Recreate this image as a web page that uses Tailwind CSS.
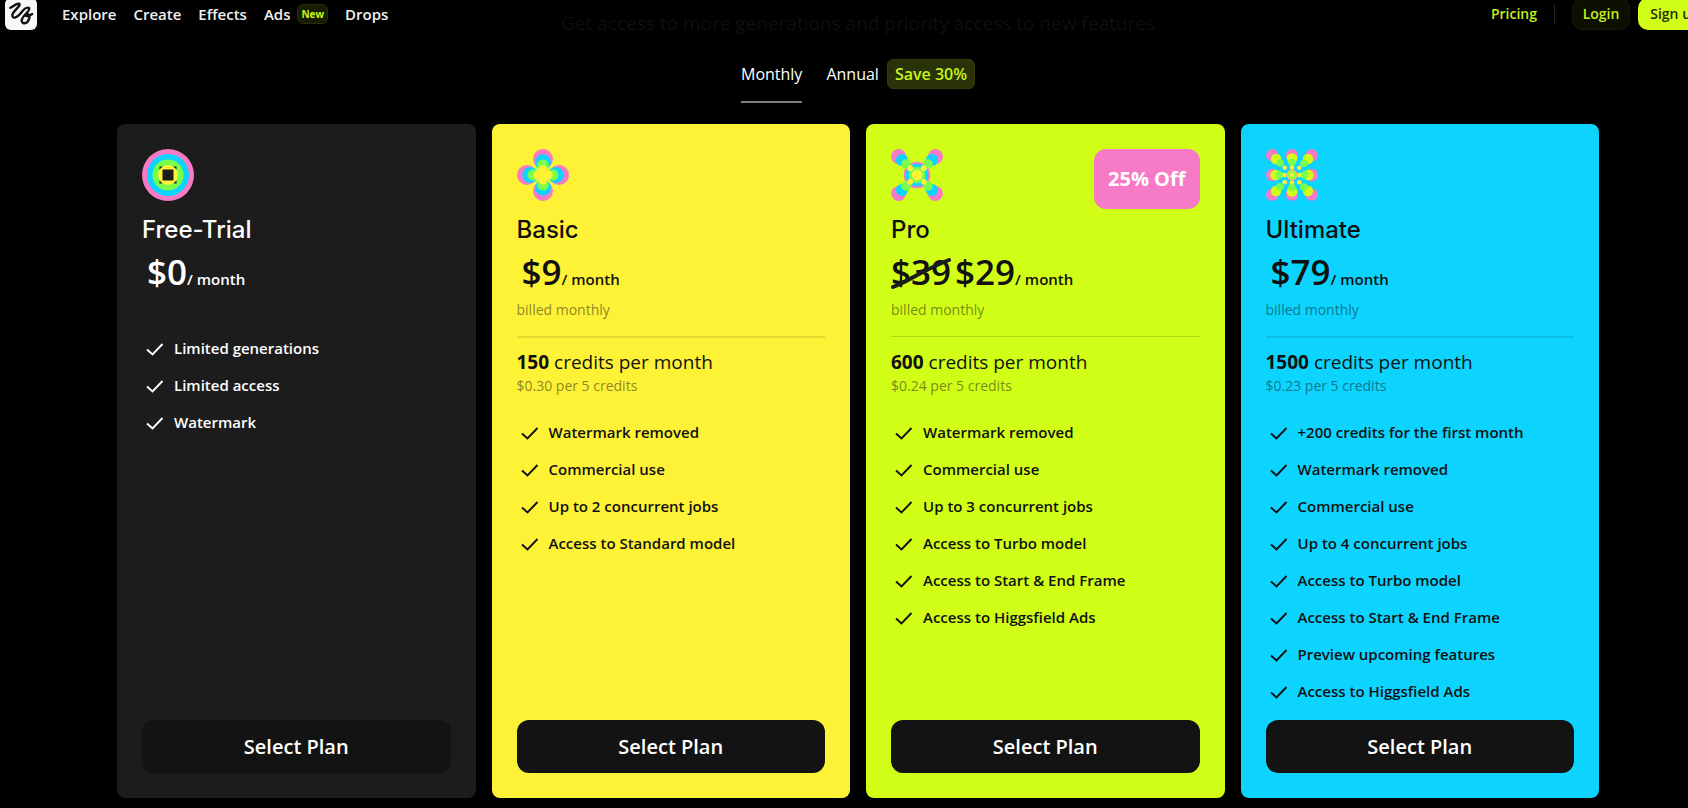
<!DOCTYPE html>
<html lang="en">

<head>
  <meta charset="UTF-8">
  <meta name="viewport" content="width=device-width, initial-scale=1.0">
  <script src="https://cdn.jsdelivr.net/npm/@tailwindcss/browser@4"></script>
  <title>Pricing</title>
</head>

<body class="bg-black text-white font-['Open_Sans',sans-serif] overflow-x-hidden">

  <!-- shared shapes -->
  <svg class="hidden">
    <symbol id="check" viewBox="0 0 18 14">
      <path d="M1 7.500 6.500 12.500 16.500 2" fill="none" stroke="currentColor" stroke-width="1.900" />
    </symbol>
    <g id="petal-basic">
      <circle cx="26" cy="10" r="10" fill="#f77ac6" />
      <circle cx="26" cy="13.300" r="8" fill="#0cd4ff" />
      <circle cx="26" cy="16.400" r="5.800" fill="#78ff4b" />
      <circle cx="26" cy="20.400" r="4.200" fill="#fef237" />
    </g>
    <g id="petal-pro">
      <circle cx="7.600" cy="7.600" r="7.500" fill="#f77ac6" />
      <circle cx="11" cy="11" r="6.100" fill="#0cd4ff" />
      <circle cx="15" cy="15" r="4.700" fill="#78ff4b" />
      <circle cx="19.200" cy="19.200" r="2.900" fill="#fef237" />
    </g>
    <g id="petal-ultimate">
      <circle cx="6.300" cy="6.300" r="6.200" fill="#f77ac6" />
      <circle cx="10" cy="10" r="5.200" fill="#d0fe17" />
      <circle cx="14.200" cy="14" r="3.700" fill="#78ff4b" />
      <circle cx="18.700" cy="18.700" r="2.300" fill="#fef237" />
      <circle cx="26" cy="6.300" r="6.200" fill="#f77ac6" />
      <circle cx="26" cy="9.500" r="5.200" fill="#d0fe17" />
      <circle cx="26" cy="13.500" r="3.700" fill="#78ff4b" />
      <circle cx="26" cy="18.700" r="2.300" fill="#fef237" />
    </g>
  </svg>

  <div class="-mr-7">
    <header class="absolute top-0 left-0 -right-7 h-7 pl-[5px] pr-1 flex items-center justify-between text-[15px] font-semibold">
      <div class="flex items-center">
        <a href="#" aria-label="Home" class="mr-[25px]">
          <svg class="w-8 h-8 rounded-md bg-[#f8f8f8]" viewBox="0 0 33 33" fill="none" stroke="#131313" stroke-width="2.500" stroke-linecap="round" stroke-linejoin="round">
            <path d="M5.500 10C8 9.500 11 5.500 14.500 6C17.500 8 7.500 13.500 7.500 18C8 22.500 13 19.500 16 16C19 12 22 8.500 24.800 10.300C27 13 17 18.500 17.200 23.500C18 27.800 23.500 26.500 25 21C26 16.500 21.500 14.500 21 17.500C21.500 19.500 25 18.500 28 16.500" />
          </svg>
        </a>
        <nav class="flex items-center gap-[17px] text-[#f0f0f0]">
          <a href="#">Explore</a>
          <a href="#">Create</a>
          <a href="#">Effects</a>
          <a href="#" class="flex items-center gap-[7px]">Ads
            <span class="h-5 px-[3px] rounded-md border border-[#272e08] bg-[#171c03] text-[#c8f51a] text-[10px] leading-[18px] font-bold">New</span>
          </a>
          <a href="#">Drops</a>
        </nav>
      </div>
      <div class="flex items-center text-sm text-[#c5f01c]">
        <a href="#">Pricing</a>
        <span class="w-px h-5 mx-[17px] bg-[#222]"></span>
        <button class="h-8 w-[58px] mr-2 rounded-[10px] border border-[#15190a] bg-[#0c0f02]">Login</button>
        <button class="h-8 w-[74px] rounded-[10px] bg-[#d0fe17] text-[#252d08]">Sign up</button>
      </div>
    </header>

    <main class="px-[117px] pt-[9px] pb-[10px]">
      <p class="text-center text-[19px] leading-7 text-[#0f0f0f]">Get access to more generations and priority access to new features</p>

      <div class="flex justify-center gap-6 mt-[21px] h-[45px]">
        <button class="pb-3 border-b-2 border-[#808080]">Monthly</button>
        <button class="flex items-center gap-2 h-[31px]">Annual
          <span class="px-[7px] h-[30px] leading-7 rounded-md border border-[#333b0a] bg-[#2a3208] text-[#c8f51a] font-semibold">Save 30%</span>
        </button>
      </div>

      <div class="grid grid-cols-4 gap-4 mt-[21px]">

        <section class="flex flex-col p-[25px] rounded-lg bg-[#1c1c1c]">
          <svg class="w-[52px] h-[52px]" viewBox="0 0 52 52">
            <circle cx="26" cy="26" r="26" fill="#f77ac6" />
            <circle cx="26" cy="26" r="21" fill="#0cd4ff" />
            <circle cx="26" cy="26" r="15.500" fill="#78ff4b" />
            <path d="M17.500 17.500h17v17h-17z" fill="#1c1c1c" />
            <path d="M26 16.500v19M16.500 26h19" stroke="#78ff4b" stroke-width="11" />
            <circle cx="26" cy="26" r="10" fill="#fef237" />
            <path d="M20.500 20.500h11v11h-11z" fill="#1c1c1c" />
          </svg>
          <h2 class="mt-[13px] font-['Inter',sans-serif] font-medium text-2xl leading-8">Free-Trial</h2>
          <p class="mt-[3px] pl-[5px] flex items-baseline"><span class="text-[35px] leading-[46px] font-semibold">$0</span><span class="font-semibold text-[15px] leading-5">/ month</span></p>
          <ul class="mt-[41px] flex flex-col gap-3 text-[15px] leading-[25px] font-semibold">
            <li class="flex items-center gap-[10px] pl-1"><svg class="w-[18px] h-[14px]"><use href="#check" /></svg>Limited generations</li>
            <li class="flex items-center gap-[10px] pl-1"><svg class="w-[18px] h-[14px]"><use href="#check" /></svg>Limited access</li>
            <li class="flex items-center gap-[10px] pl-1"><svg class="w-[18px] h-[14px]"><use href="#check" /></svg>Watermark</li>
          </ul>
          <button class="mt-auto h-[53px] rounded-xl bg-[#131313] text-white text-xl font-semibold">Select Plan</button>
        </section>

        <section class="flex flex-col p-[25px] rounded-lg bg-[#fef237] text-[#111]">
          <svg class="w-[52px] h-[52px]" viewBox="0 0 52 52">
            <use href="#petal-basic" />
            <use href="#petal-basic" transform="rotate(90 26 26)" />
            <use href="#petal-basic" transform="rotate(180 26 26)" />
            <use href="#petal-basic" transform="rotate(270 26 26)" />
            <circle cx="26" cy="26" r="4.500" fill="#fef237" />
          </svg>
          <h2 class="mt-[13px] font-['Inter',sans-serif] font-medium text-2xl leading-8">Basic</h2>
          <p class="mt-[3px] pl-[5px] flex items-baseline"><span class="text-[35px] leading-[46px] font-semibold">$9</span><span class="font-semibold text-[15px] leading-5">/ month</span></p>
          <p class="mt-[5px] text-sm leading-5 text-[#111]/50">billed monthly</p>
          <hr class="mt-4 border-t-2 border-black/10">
          <p class="mt-2 text-[19px] leading-8"><b>150</b> credits per month</p>
          <p class="text-sm leading-4 text-[#111]/50">$0.30 per 5 credits</p>
          <ul class="mt-[26px] flex flex-col gap-3 text-[15px] leading-[25px] font-semibold">
            <li class="flex items-center gap-[10px] pl-1"><svg class="w-[18px] h-[14px]"><use href="#check" /></svg>Watermark removed</li>
            <li class="flex items-center gap-[10px] pl-1"><svg class="w-[18px] h-[14px]"><use href="#check" /></svg>Commercial use</li>
            <li class="flex items-center gap-[10px] pl-1"><svg class="w-[18px] h-[14px]"><use href="#check" /></svg>Up to 2 concurrent jobs</li>
            <li class="flex items-center gap-[10px] pl-1"><svg class="w-[18px] h-[14px]"><use href="#check" /></svg>Access to Standard model</li>
          </ul>
          <button class="mt-auto h-[53px] rounded-xl bg-[#131313] text-white text-xl font-semibold">Select Plan</button>
        </section>

        <section class="relative flex flex-col p-[25px] rounded-lg bg-[#d0fe17] text-[#111]">
          <span class="absolute top-[25px] right-[25px] px-[14px] h-[60px] leading-[60px] rounded-xl bg-[#f77ac6] text-white text-xl font-bold">25% Off</span>
          <svg class="w-[52px] h-[52px]" viewBox="0 0 52 52">
            <circle cx="26" cy="26" r="13.300" fill="#f77ac6" />
            <circle cx="26" cy="26" r="11.300" fill="#0cd4ff" />
            <circle cx="26" cy="26" r="8.300" fill="#78ff4b" />
            <use href="#petal-pro" />
            <use href="#petal-pro" transform="rotate(90 26 26)" />
            <use href="#petal-pro" transform="rotate(180 26 26)" />
            <use href="#petal-pro" transform="rotate(270 26 26)" />
            <circle cx="26" cy="26" r="5.300" fill="#fef237" />
          </svg>
          <h2 class="mt-[13px] font-['Inter',sans-serif] font-medium text-2xl leading-8">Pro</h2>
          <p class="mt-[3px] flex items-baseline">
            <span class="relative mr-1 text-[35px] leading-[46px] font-semibold">$39
              <svg class="absolute left-0 top-2 w-full h-[32px]" viewBox="0 0 60 32" preserveAspectRatio="none" fill="none" stroke="#1c1c1c" stroke-width="4" stroke-linecap="round">
                <path d="M2 30C18 24 32 13 58 3" />
              </svg>
            </span>
            <span class="text-[35px] leading-[46px] font-semibold">$29</span><span class="font-semibold text-[15px] leading-5">/ month</span>
          </p>
          <p class="mt-[5px] text-sm leading-5 text-[#111]/50">billed monthly</p>
          <hr class="mt-4 mb-px border-t border-black/15">
          <p class="mt-2 text-[19px] leading-8"><b>600</b> credits per month</p>
          <p class="text-sm leading-4 text-[#111]/50">$0.24 per 5 credits</p>
          <ul class="mt-[26px] flex flex-col gap-3 text-[15px] leading-[25px] font-semibold">
            <li class="flex items-center gap-[10px] pl-1"><svg class="w-[18px] h-[14px]"><use href="#check" /></svg>Watermark removed</li>
            <li class="flex items-center gap-[10px] pl-1"><svg class="w-[18px] h-[14px]"><use href="#check" /></svg>Commercial use</li>
            <li class="flex items-center gap-[10px] pl-1"><svg class="w-[18px] h-[14px]"><use href="#check" /></svg>Up to 3 concurrent jobs</li>
            <li class="flex items-center gap-[10px] pl-1"><svg class="w-[18px] h-[14px]"><use href="#check" /></svg>Access to Turbo model</li>
            <li class="flex items-center gap-[10px] pl-1"><svg class="w-[18px] h-[14px]"><use href="#check" /></svg>Access to Start &amp; End Frame</li>
            <li class="flex items-center gap-[10px] pl-1"><svg class="w-[18px] h-[14px]"><use href="#check" /></svg>Access to Higgsfield Ads</li>
          </ul>
          <button class="mt-auto h-[53px] rounded-xl bg-[#131313] text-white text-xl font-semibold">Select Plan</button>
        </section>

        <section class="flex flex-col p-[25px] rounded-lg bg-[#0cd4ff] text-[#111]">
          <svg class="w-[52px] h-[52px]" viewBox="0 0 52 52">
            <use href="#petal-ultimate" />
            <use href="#petal-ultimate" transform="rotate(90 26 26)" />
            <use href="#petal-ultimate" transform="rotate(180 26 26)" />
            <use href="#petal-ultimate" transform="rotate(270 26 26)" />
            <circle cx="26" cy="26" r="5.700" fill="#f77ac6" />
            <circle cx="26" cy="26" r="4.900" fill="#d0fe17" />
            <circle cx="26" cy="26" r="3.900" fill="#78ff4b" />
            <circle cx="26" cy="26" r="2.300" fill="#fef237" />
          </svg>
          <h2 class="mt-[13px] font-['Inter',sans-serif] font-medium text-2xl leading-8">Ultimate</h2>
          <p class="mt-[3px] pl-[5px] flex items-baseline"><span class="text-[35px] leading-[46px] font-semibold">$79</span><span class="font-semibold text-[15px] leading-5">/ month</span></p>
          <p class="mt-[5px] text-sm leading-5 text-[#111]/50">billed monthly</p>
          <hr class="mt-4 border-t-2 border-black/10">
          <p class="mt-2 text-[19px] leading-8"><b>1500</b> credits per month</p>
          <p class="text-sm leading-4 text-[#111]/50">$0.23 per 5 credits</p>
          <ul class="mt-[26px] mb-4 flex flex-col gap-3 text-[15px] leading-[25px] font-semibold">
            <li class="flex items-center gap-[10px] pl-1"><svg class="w-[18px] h-[14px]"><use href="#check" /></svg>+200 credits for the first month</li>
            <li class="flex items-center gap-[10px] pl-1"><svg class="w-[18px] h-[14px]"><use href="#check" /></svg>Watermark removed</li>
            <li class="flex items-center gap-[10px] pl-1"><svg class="w-[18px] h-[14px]"><use href="#check" /></svg>Commercial use</li>
            <li class="flex items-center gap-[10px] pl-1"><svg class="w-[18px] h-[14px]"><use href="#check" /></svg>Up to 4 concurrent jobs</li>
            <li class="flex items-center gap-[10px] pl-1"><svg class="w-[18px] h-[14px]"><use href="#check" /></svg>Access to Turbo model</li>
            <li class="flex items-center gap-[10px] pl-1"><svg class="w-[18px] h-[14px]"><use href="#check" /></svg>Access to Start &amp; End Frame</li>
            <li class="flex items-center gap-[10px] pl-1"><svg class="w-[18px] h-[14px]"><use href="#check" /></svg>Preview upcoming features</li>
            <li class="flex items-center gap-[10px] pl-1"><svg class="w-[18px] h-[14px]"><use href="#check" /></svg>Access to Higgsfield Ads</li>
          </ul>
          <button class="mt-auto h-[53px] rounded-xl bg-[#131313] text-white text-xl font-semibold">Select Plan</button>
        </section>

      </div>
    </main>
  </div>
</body>

</html>
